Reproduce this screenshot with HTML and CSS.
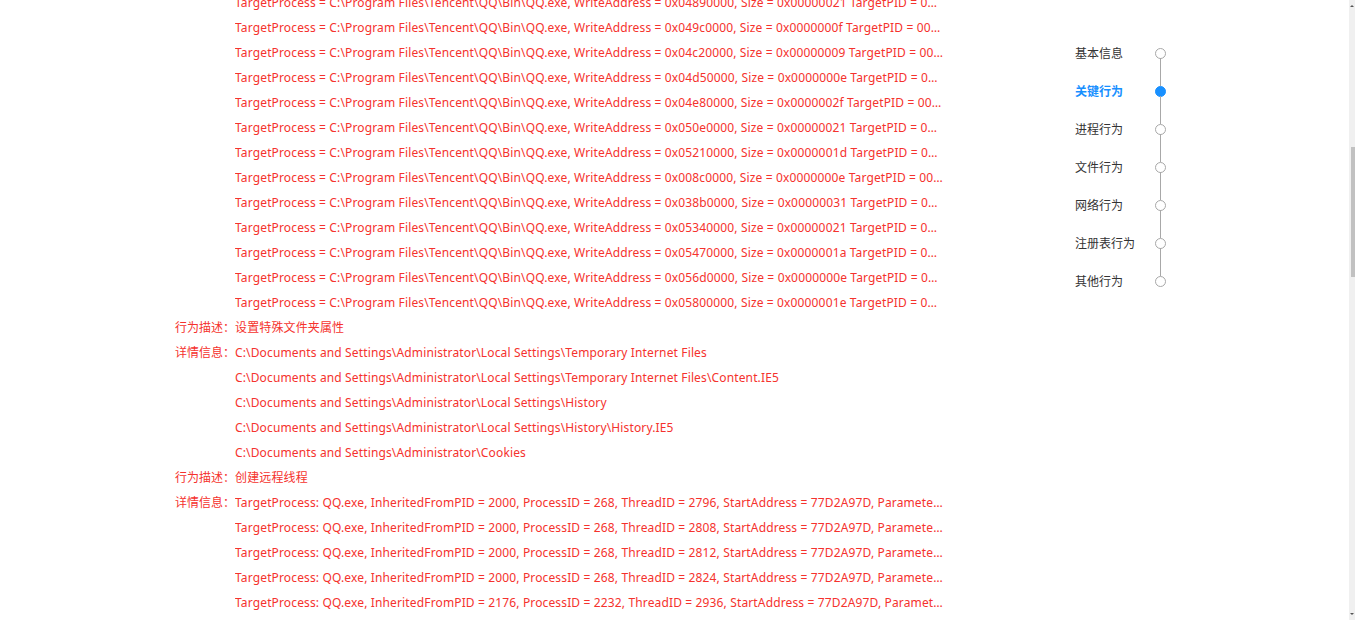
FILE: index.html
```html
<!DOCTYPE html>
<html lang="zh-CN">
<head>
  <meta charset="UTF-8">
  <meta name="viewport" content="width=device-width, initial-scale=1.0">
  <title>关键行为</title>
  <link rel="stylesheet" href="styles.css">
</head>
<body>
  <div class="page">
    <main class="report">
      <div class="group">
        <span class="label"></span>
        <div class="values">
          <div class="line">TargetProcess = C:\Program Files\Tencent\QQ\Bin\QQ.exe, WriteAddress = 0x04890000, Size = 0x00000021 TargetPID = 000000878</div>
          <div class="line">TargetProcess = C:\Program Files\Tencent\QQ\Bin\QQ.exe, WriteAddress = 0x049c0000, Size = 0x0000000f TargetPID = 000000878</div>
          <div class="line">TargetProcess = C:\Program Files\Tencent\QQ\Bin\QQ.exe, WriteAddress = 0x04c20000, Size = 0x00000009 TargetPID = 000000878</div>
          <div class="line">TargetProcess = C:\Program Files\Tencent\QQ\Bin\QQ.exe, WriteAddress = 0x04d50000, Size = 0x0000000e TargetPID = 000000878</div>
          <div class="line">TargetProcess = C:\Program Files\Tencent\QQ\Bin\QQ.exe, WriteAddress = 0x04e80000, Size = 0x0000002f TargetPID = 000000878</div>
          <div class="line">TargetProcess = C:\Program Files\Tencent\QQ\Bin\QQ.exe, WriteAddress = 0x050e0000, Size = 0x00000021 TargetPID = 000000878</div>
          <div class="line">TargetProcess = C:\Program Files\Tencent\QQ\Bin\QQ.exe, WriteAddress = 0x05210000, Size = 0x0000001d TargetPID = 000000878</div>
          <div class="line">TargetProcess = C:\Program Files\Tencent\QQ\Bin\QQ.exe, WriteAddress = 0x008c0000, Size = 0x0000000e TargetPID = 000000878</div>
          <div class="line">TargetProcess = C:\Program Files\Tencent\QQ\Bin\QQ.exe, WriteAddress = 0x038b0000, Size = 0x00000031 TargetPID = 000000878</div>
          <div class="line">TargetProcess = C:\Program Files\Tencent\QQ\Bin\QQ.exe, WriteAddress = 0x05340000, Size = 0x00000021 TargetPID = 000000878</div>
          <div class="line">TargetProcess = C:\Program Files\Tencent\QQ\Bin\QQ.exe, WriteAddress = 0x05470000, Size = 0x0000001a TargetPID = 000000878</div>
          <div class="line">TargetProcess = C:\Program Files\Tencent\QQ\Bin\QQ.exe, WriteAddress = 0x056d0000, Size = 0x0000000e TargetPID = 000000878</div>
          <div class="line">TargetProcess = C:\Program Files\Tencent\QQ\Bin\QQ.exe, WriteAddress = 0x05800000, Size = 0x0000001e TargetPID = 000000878</div>
        </div>
      </div>

      <div class="group">
        <span class="label">行为描述：</span>
        <div class="values"><div class="line">设置特殊文件夹属性</div></div>
      </div>
      <div class="group">
        <span class="label">详情信息：</span>
        <div class="values">
          <div class="line">C:\Documents and Settings\Administrator\Local Settings\Temporary Internet Files</div>
          <div class="line">C:\Documents and Settings\Administrator\Local Settings\Temporary Internet Files\Content.IE5</div>
          <div class="line">C:\Documents and Settings\Administrator\Local Settings\History</div>
          <div class="line">C:\Documents and Settings\Administrator\Local Settings\History\History.IE5</div>
          <div class="line">C:\Documents and Settings\Administrator\Cookies</div>
        </div>
      </div>

      <div class="group">
        <span class="label">行为描述：</span>
        <div class="values"><div class="line">创建远程线程</div></div>
      </div>
      <div class="group">
        <span class="label">详情信息：</span>
        <div class="values">
          <div class="line">TargetProcess: QQ.exe, InheritedFromPID = 2000, ProcessID = 268, ThreadID = 2796, StartAddress = 77D2A97D, Parameter = 00000000</div>
          <div class="line">TargetProcess: QQ.exe, InheritedFromPID = 2000, ProcessID = 268, ThreadID = 2808, StartAddress = 77D2A97D, Parameter = 00000000</div>
          <div class="line">TargetProcess: QQ.exe, InheritedFromPID = 2000, ProcessID = 268, ThreadID = 2812, StartAddress = 77D2A97D, Parameter = 00000000</div>
          <div class="line">TargetProcess: QQ.exe, InheritedFromPID = 2000, ProcessID = 268, ThreadID = 2824, StartAddress = 77D2A97D, Parameter = 00000000</div>
          <div class="line">TargetProcess: QQ.exe, InheritedFromPID = 2176, ProcessID = 2232, ThreadID = 2936, StartAddress = 77D2A97D, Parameter = 00000000</div>
        </div>
      </div>
    </main>

    <!-- 右侧锚点导航 -->
    <nav class="anchor">
      <div class="anchor-item"><span class="anchor-text">基本信息</span><span class="dot"></span></div>
      <div class="anchor-item active"><span class="anchor-text">关键行为</span><span class="dot"></span></div>
      <div class="anchor-item"><span class="anchor-text">进程行为</span><span class="dot"></span></div>
      <div class="anchor-item"><span class="anchor-text">文件行为</span><span class="dot"></span></div>
      <div class="anchor-item"><span class="anchor-text">网络行为</span><span class="dot"></span></div>
      <div class="anchor-item"><span class="anchor-text">注册表行为</span><span class="dot"></span></div>
      <div class="anchor-item"><span class="anchor-text">其他行为</span><span class="dot"></span></div>
    </nav>

    <div class="scrollbar">
      <span class="arrow up"></span>
      <div class="track"><div class="thumb"></div></div>
      <span class="arrow down"></span>
    </div>
  </div>
</body>
</html>
```

FILE: styles.css
```css
* { box-sizing: border-box; margin: 0; padding: 0; }
body { background: #fff; color: #333; font-family: "Noto Sans", "Noto Sans CJK SC", sans-serif; font-size: 12px; }
.page { display: flex; height: 620px; overflow: hidden; }

.report { width: 943px; padding-left: 175px; margin-top: -10px; color: #f5322d; }
.group { display: flex; gap: 2px; }
.label { width: 58px; flex: none; text-align: right; line-height: 25px; white-space: nowrap; }
.values { width: 708px; }
.line { height: 25px; line-height: 25px; white-space: nowrap; overflow: hidden; text-overflow: ellipsis; letter-spacing: 0.14px; }

.anchor { margin-left: 132px; padding-top: 34px; width: 100px; }
.anchor-item { position: relative; display: flex; align-items: center; height: 38px; color: #333; }
.anchor-text { width: 80px; }
.dot { width: 11px; height: 11px; border: 1px solid #a8a8a8; border-radius: 50%; background: #fff; }
.anchor-item:not(:last-child)::after { content: ""; position: absolute; left: 85px; top: 24px; width: 1px; height: 28px; background: #a8a8a8; }
.anchor-item.active { color: #1890ff; font-weight: bold; }
.anchor-item.active .dot { background: #1890ff; border-color: #1890ff; }

.scrollbar { margin-left: auto; width: 6px; background: #f0f0f0; display: flex; flex-direction: column; align-items: center; }
.arrow { width: 0; height: 0; border-left: 2px solid transparent; border-right: 2px solid transparent; margin: 5px 0; }
.arrow.up { border-bottom: 2px solid #555; }
.arrow.down { border-top: 2px solid #555; }
.track { flex: 1; width: 100%; padding-top: 135px; display: flex; justify-content: flex-end; }
.thumb { width: 4px; height: 130px; background: #c1c1c1; }
```
